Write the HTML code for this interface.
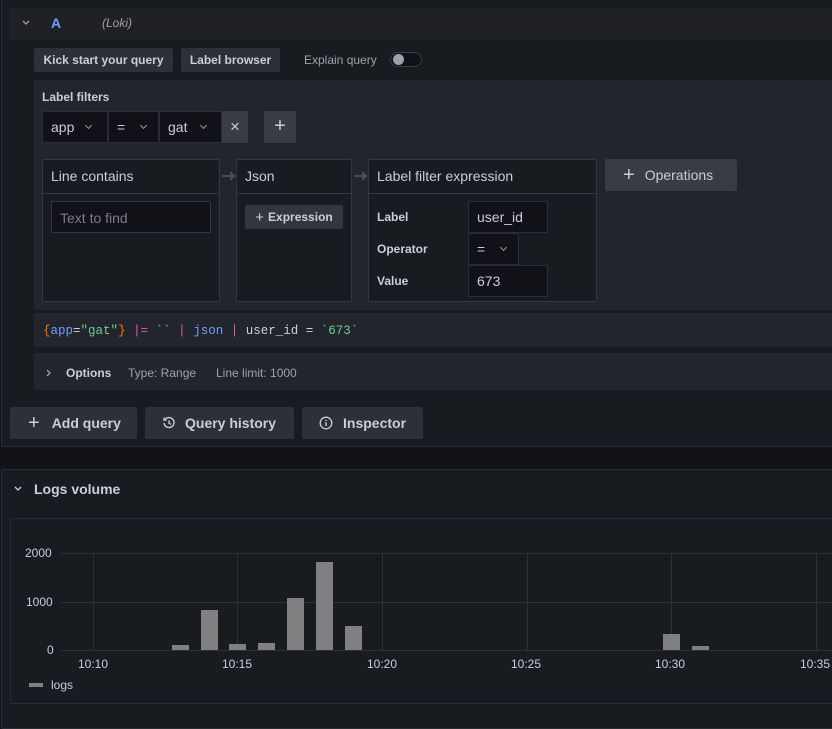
<!DOCTYPE html>
<html><head><meta charset="utf-8"><style>
*{box-sizing:border-box;margin:0;padding:0}
body{width:832px;height:713px;overflow:hidden;background:#111217;font-family:"Liberation Sans",sans-serif;color:#ccccdc;position:relative}
.a{position:absolute}
.btn{position:absolute;background:#2d3036;color:#ccccdc;font-size:12px;font-weight:bold;display:flex;align-items:center;justify-content:center;border-radius:2px}
.bbtn{position:absolute;background:#2d3036;color:#ccccdc;font-size:14px;font-weight:bold;display:flex;align-items:center;border-radius:2px}
.sel{position:absolute;background:#111217;border:1px solid #2a2d33;font-size:14px;color:#ccccdc;display:flex;align-items:center;padding-left:8px}
.card{position:absolute;background:#181b1f;border:1px solid #34373d;border-radius:2px}
.ch{height:34px;border-bottom:1px solid #34373d;font-size:14px;padding:8px 0 0 8px;color:#ccccdc}
.lbl{position:absolute;font-size:12px;font-weight:bold;color:#ccccdc}
.chev{display:inline-block;width:5px;height:5px;border-right:1px solid #999;border-bottom:1px solid #999;transform:rotate(45deg);margin-left:12px;margin-top:-3px}
.tk{position:absolute;font-size:12px;color:#ccccdc}
.bar{position:absolute;background:#808080}
</style></head><body>
<div class="a" style="left:1px;top:-2px;width:840px;height:449px;background:#181b1f;border:1px solid #2a2d33;border-radius:2px"></div>
<div class="a" style="left:10px;top:8px;width:830px;height:32px;background:#1f2126"></div>
<svg class="a" style="left:21px;top:20px" width="10" height="6" viewBox="0 0 10 6"><path d="M2 1l3 3 3-3" fill="none" stroke="#9fa1a8" stroke-width="1.3"/></svg>
<div class="a" style="left:51px;top:15px;font-size:14px;font-weight:bold;color:#6e9fff">A</div>
<div class="a" style="left:102px;top:16px;font-size:12px;font-style:italic;color:#9fa1a8">(Loki)</div>
<div class="btn" style="left:34px;top:48px;width:139px;height:24px">Kick start your query</div>
<div class="btn" style="left:181px;top:48px;width:99px;height:24px">Label browser</div>
<div class="a" style="left:304px;top:53px;font-size:12px;color:#9fa1a8">Explain query</div>
<div class="a" style="left:390px;top:52px;width:32px;height:15px;border:1px solid #3a3d44;border-radius:8px;background:#111217"></div>
<div class="a" style="left:393px;top:54px;width:11px;height:11px;border-radius:50%;background:#9fa1a8"></div>
<div class="a" style="left:34px;top:80px;width:800px;height:230px;background:#22252b"></div>
<div class="lbl" style="left:42px;top:90px">Label filters</div>
<div class="sel" style="left:42px;top:111px;width:66px;height:32px">app<span class="chev"></span></div>
<div class="sel" style="left:108px;top:111px;width:51px;height:32px">=<span class="chev" style="margin-left:16px"></span></div>
<div class="sel" style="left:159px;top:111px;width:63px;height:32px">gat<span class="chev" style="margin-left:14px"></span></div>
<div class="a" style="left:222px;top:111px;width:26px;height:32px;background:#3a3c43;color:#ccccdc;font-size:17px;text-align:center;line-height:31px">×</div>
<div class="a" style="left:264px;top:111px;width:32px;height:32px;background:#3a3c43;color:#ccccdc;font-size:20px;text-align:center;line-height:30px">+</div>
<div class="card" style="left:42px;top:159px;width:178px;height:143px"><div class="ch">Line contains</div>
<div class="a" style="left:8px;top:41px;width:160px;height:32px;background:#111217;border:1px solid #34373d;border-radius:2px;font-size:14px;color:#7a7d85;padding:8px 0 0 8px">Text to find</div></div>
<div class="a" style="left:222px;top:175px;width:12px;height:2px;background:#4a4d54"></div>
<div class="a" style="left:230px;top:171px;width:0;height:0;border-left:6px solid #4a4d54;border-top:5px solid transparent;border-bottom:5px solid transparent"></div>
<div class="card" style="left:236px;top:159px;width:116px;height:143px"><div class="ch">Json</div>
<div class="btn" style="left:8px;top:45px;width:98px;height:24px;background:#33363c"><span style="font-weight:normal;font-size:15px;margin-right:4px">+</span>Expression</div></div>
<div class="a" style="left:354px;top:175px;width:12px;height:2px;background:#4a4d54"></div>
<div class="a" style="left:362px;top:171px;width:0;height:0;border-left:6px solid #4a4d54;border-top:5px solid transparent;border-bottom:5px solid transparent"></div>
<div class="card" style="left:368px;top:159px;width:229px;height:143px"><div class="ch">Label filter expression</div></div>
<div class="lbl" style="left:377px;top:210px">Label</div>
<div class="lbl" style="left:377px;top:242px">Operator</div>
<div class="lbl" style="left:377px;top:274px">Value</div>
<div class="sel" style="left:468px;top:201px;width:80px;height:32px">user_id</div>
<div class="sel" style="left:468px;top:233px;width:51px;height:32px">=<span class="chev" style="margin-left:16px"></span></div>
<div class="sel" style="left:468px;top:265px;width:80px;height:32px">673</div>
<div class="bbtn" style="left:605px;top:159px;width:132px;height:32px;background:#3a3c43;padding-left:18px;font-weight:normal"><span style="font-size:20px;margin-right:10px">+</span>Operations</div>
<div class="a" style="left:34px;top:313px;width:800px;height:34px;background:#22252b"></div>
<div class="a" style="left:43px;top:324px;font-family:'Liberation Mono',monospace;font-size:12.5px;white-space:pre;color:#ccccdc"><span style="color:#ff780a">{</span><span style="color:#6e9fff">app</span>=<span style="color:#6ccf8e">"gat"</span><span style="color:#ff780a">}</span> <span style="color:#e04fc8">|=</span> <span style="color:#6ccf8e">``</span> <span style="color:#e04fc8">|</span> <span style="color:#6e9fff">json</span> <span style="color:#e04fc8">|</span> user_id = <span style="color:#6ccf8e">`673`</span></div>
<div class="a" style="left:34px;top:353px;width:800px;height:37px;background:#22252b"></div>
<svg class="a" style="left:46px;top:368px" width="6" height="10" viewBox="0 0 6 10"><path d="M1 2l3 3-3 3" fill="none" stroke="#9fa1a8" stroke-width="1.3"/></svg>
<div class="a" style="left:66px;top:366px;font-size:12px;font-weight:bold">Options</div>
<div class="a" style="left:128px;top:366px;font-size:12px;color:#9fa1a8">Type: Range</div>
<div class="a" style="left:216px;top:366px;font-size:12px;color:#9fa1a8">Line limit: 1000</div>
<div class="bbtn" style="left:10px;top:407px;width:127px;height:32px;padding-left:18px"><span style="font-size:20px;font-weight:normal;margin-right:12px">+</span>Add query</div>
<div class="bbtn" style="left:145px;top:407px;width:149px;height:32px;padding-left:17px"><svg width="14" height="14" viewBox="0 0 14 14" style="margin-right:9px"><path d="M3 3.5A5 5 0 1 1 2 7" fill="none" stroke="#ccccdc" stroke-width="1.4"/><path d="M2 1.5V4h2.5" fill="none" stroke="#ccccdc" stroke-width="1.4"/><path d="M7 4.5V7l1.8 1.5" fill="none" stroke="#ccccdc" stroke-width="1.4"/></svg>Query history</div>
<div class="bbtn" style="left:302px;top:407px;width:121px;height:32px;padding-left:17px"><svg width="14" height="14" viewBox="0 0 14 14" style="margin-right:10px"><circle cx="7" cy="7" r="5.8" fill="none" stroke="#ccccdc" stroke-width="1.3"/><path d="M7 6.3V10" stroke="#ccccdc" stroke-width="1.4"/><circle cx="7" cy="4.4" r=".8" fill="#ccccdc"/></svg>Inspector</div>
<div class="a" style="left:1px;top:469px;width:840px;height:260px;background:#181b1f;border:1px solid #2a2d33;border-radius:2px"></div>
<svg class="a" style="left:13px;top:486px" width="10" height="6" viewBox="0 0 10 6"><path d="M2 1l3 3 3-3" fill="none" stroke="#ccccdc" stroke-width="1.3"/></svg>
<div class="a" style="left:34px;top:481px;font-size:14px;font-weight:bold">Logs volume</div>
<div class="a" style="left:10px;top:518px;width:830px;height:186px;background:#181b1f;border:1px solid #2a2d33;border-radius:2px"></div>
<div class="a" style="left:61px;top:553px;width:780px;height:1px;background:#2e3036"></div>
<div class="a" style="left:61px;top:602px;width:780px;height:1px;background:#2e3036"></div>
<div class="a" style="left:61px;top:650px;width:780px;height:1px;background:#2e3036"></div>
<div class="a" style="left:93px;top:553px;width:1px;height:98px;background:#2e3036"></div>
<div class="a" style="left:237px;top:553px;width:1px;height:98px;background:#2e3036"></div>
<div class="a" style="left:382px;top:553px;width:1px;height:98px;background:#2e3036"></div>
<div class="a" style="left:527px;top:553px;width:1px;height:98px;background:#2e3036"></div>
<div class="a" style="left:671px;top:553px;width:1px;height:98px;background:#2e3036"></div>
<div class="a" style="left:816px;top:553px;width:1px;height:98px;background:#2e3036"></div>
<div class="tk" style="left:25px;top:546px">2000</div>
<div class="tk" style="left:26px;top:595px">1000</div>
<div class="tk" style="left:47px;top:643px">0</div>
<div class="tk" style="left:78px;top:657px">10:10</div>
<div class="tk" style="left:222px;top:657px">10:15</div>
<div class="tk" style="left:367px;top:657px">10:20</div>
<div class="tk" style="left:511px;top:657px">10:25</div>
<div class="tk" style="left:655px;top:657px">10:30</div>
<div class="tk" style="left:800px;top:657px">10:35</div>
<div class="bar" style="left:172px;top:645px;width:17px;height:5px"></div>
<div class="bar" style="left:201px;top:610px;width:17px;height:40px"></div>
<div class="bar" style="left:229px;top:644px;width:17px;height:6px"></div>
<div class="bar" style="left:258px;top:643px;width:17px;height:7px"></div>
<div class="bar" style="left:287px;top:598px;width:17px;height:52px"></div>
<div class="bar" style="left:316px;top:562px;width:17px;height:88px"></div>
<div class="bar" style="left:345px;top:626px;width:17px;height:24px"></div>
<div class="bar" style="left:663px;top:634px;width:17px;height:16px"></div>
<div class="bar" style="left:692px;top:646px;width:17px;height:4px"></div>
<div class="a" style="left:29px;top:683px;width:14px;height:4px;background:#808080"></div>
<div class="tk" style="left:51px;top:678px">logs</div>
</body></html>
